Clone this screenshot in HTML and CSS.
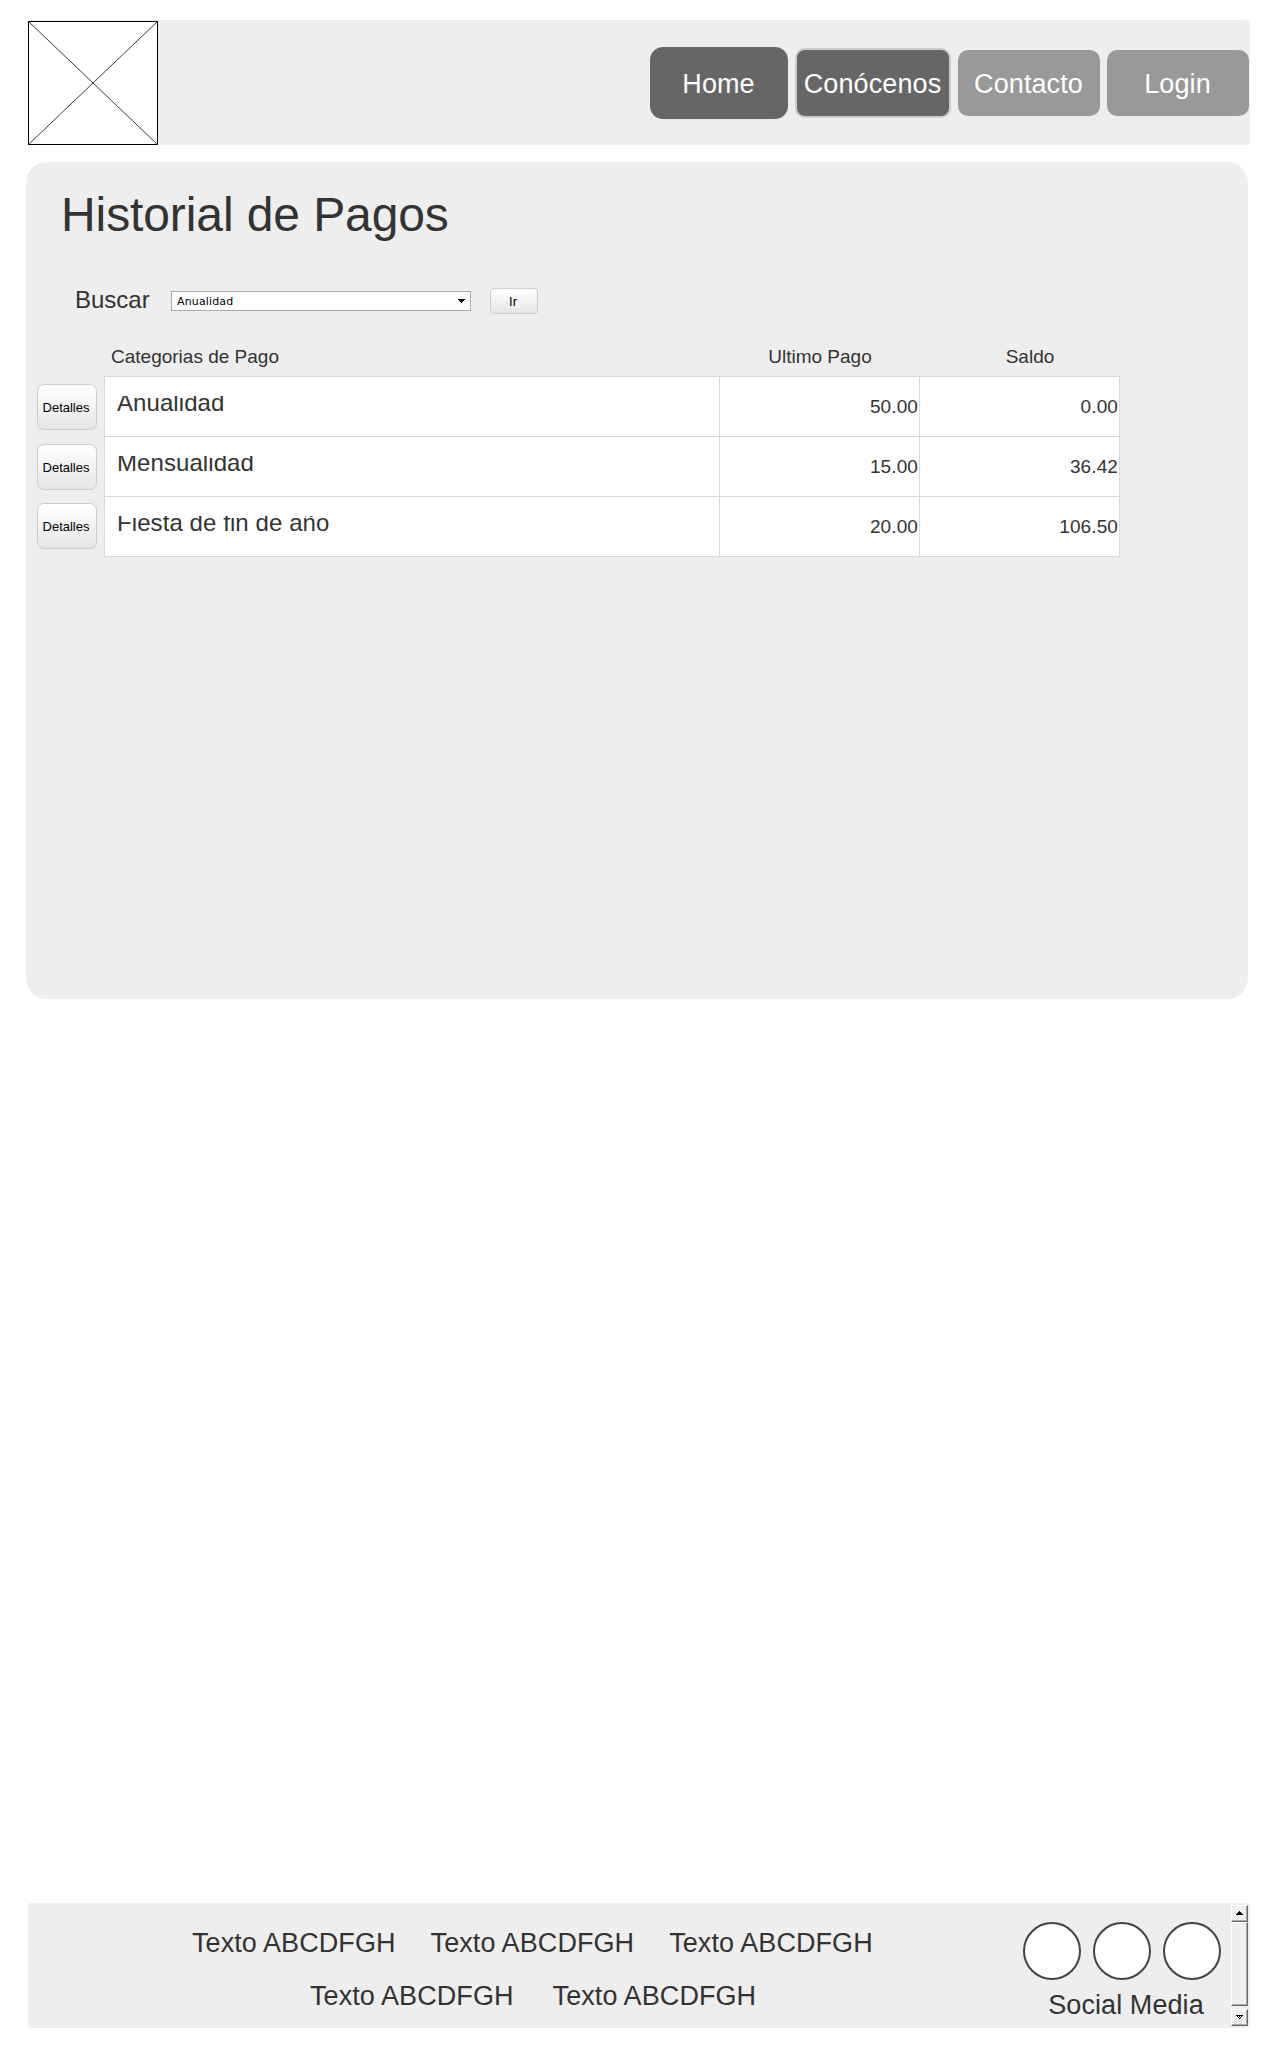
FILE: index.html
```html
<!DOCTYPE html>
<html lang="es">
<head>
<meta charset="utf-8">
<title>Historial de Pagos</title>
<link rel="stylesheet" href="styles.css">
</head>
<body>
<header class="header">
  <svg class="logo" width="130" height="124" viewBox="0 0 130 124">
    <rect x="0.5" y="0.5" width="129" height="123" fill="#fff" stroke="#000"/>
    <path d="M.5 .5L129.5 123.5M.5 123.5L129.5 .5" stroke="#222" stroke-width="0.9"/>
  </svg>
  <nav class="nav">
    <a class="nav-item home">Home</a>
    <a class="nav-item about">Conócenos</a>
    <a class="nav-item contact">Contacto</a>
    <a class="nav-item login">Login</a>
  </nav>
</header>

<main class="panel">
  <h1 class="title">Historial de Pagos</h1>
  <div class="search">
    <span class="search-label">Buscar</span>
    <div class="select">
      <span>Anualidad</span>
      <svg width="7" height="4" viewBox="0 0 7 4" shape-rendering="crispEdges"><path d="M0 0H7V1H6V2H5V3H4V4H3V3H2V2H1V1H0Z"/></svg>
    </div>
    <button class="go">Ir</button>
  </div>
  <div class="heads">
    <span class="head-name">Categorias de Pago</span>
    <span class="head-last">Ultimo Pago</span>
    <span class="head-balance">Saldo</span>
  </div>
  <div class="payments">
    <div class="actions">
      <button class="details">Detalles</button>
      <button class="details">Detalles</button>
      <button class="details last">Detalles</button>
    </div>
    <div class="table">
      <div class="cell name"><span>Anualidad</span></div><div class="cell num">50.00</div><div class="cell num">0.00</div>
      <div class="cell name"><span>Mensualidad</span></div><div class="cell num">15.00</div><div class="cell num">36.42</div>
      <div class="cell name"><span>Fiesta de fin de año</span></div><div class="cell num">20.00</div><div class="cell num">106.50</div>
    </div>
  </div>
</main>

<footer class="footer">
  <div class="links">
    <div class="links-row first"><span>Texto ABCDFGH</span><span>Texto ABCDFGH</span><span>Texto ABCDFGH</span></div>
    <div class="links-row second"><span>Texto ABCDFGH</span><span>Texto ABCDFGH</span></div>
  </div>
  <div class="social">
    <div class="circles"><i></i><i></i><i></i></div>
    <span class="social-label">Social Media</span>
  </div>
  <div class="scrollbar">
    <div class="scroll-part arrow"><svg width="7" height="4" viewBox="0 0 7 4" shape-rendering="crispEdges"><path d="M3 0H4V1H5V2H6V3H7V4H0V3H1V2H2V1H3Z"/></svg></div>
    <div class="scroll-part thumb"></div>
    <div class="scroll-part arrow"><svg width="7" height="4" viewBox="0 0 7 4" shape-rendering="crispEdges"><path d="M0 0H7V1H6V2H5V3H4V4H3V3H2V2H1V1H0Z"/><path fill="#eee" d="M2 1h1v1H2zM4 1h1v1H4zM3 2h1v1H3z"/></svg></div>
  </div>
</footer>
</body>
</html>
```
FILE: styles.css
```css
* { box-sizing: border-box; }
body {
  margin: 0;
  height: 2048px;
  padding: 20px 30px 20px 26px;
  display: flex;
  flex-direction: column;
  background: #fff;
  color: #333;
  font-family: "Liberation Sans", Arial, sans-serif;
}
button { font-family: inherit; padding: 0; color: #000; }

.header {
  width: 1222px;
  height: 125px;
  margin-left: 2px;
  padding-right: 1px;
  display: flex;
  justify-content: space-between;
  background: #eee;
  border-radius: 3px;
  flex: none;
}
.logo { margin-top: 1px; }
.nav { display: flex; align-items: center; height: 126px; }
.nav-item {
  display: flex;
  align-items: center;
  justify-content: center;
  width: 142px;
  height: 66px;
  margin-left: 7px;
  padding: 2px 1px 0 0;
  border-radius: 10px;
  background: #999;
  color: #fff;
  font-size: 27px;
  line-height: 31px;
  letter-spacing: 0.1px;
}
.home { width: 138px; height: 72px; border-radius: 13px; background: #666; }
.about { width: 156px; height: 70px; border: 2px solid #ccc; background: #666; }

.panel {
  width: 1222px;
  height: 837px;
  margin-top: 17px;
  padding-top: 25px;
  background: #eee;
  border-radius: 21px;
  flex: none;
}
.title { margin: 0 0 0 35px; font-size: 48px; line-height: 55px; font-weight: 400; letter-spacing: -0.1px; }
.search { display: flex; margin: 44px 0 0 49px; height: 28px; }
.search-label { width: 96px; font-size: 24px; line-height: 28px; }
.select {
  display: flex;
  align-items: center;
  justify-content: space-between;
  width: 300px;
  height: 20px;
  margin-top: 5px;
  padding: 0 5px;
  border: 1px solid #aaa;
  background: #fff;
  color: #000;
  font: 11px/18px "DejaVu Sans", Verdana, sans-serif;
  letter-spacing: 0.15px;
}
.select span { padding-top: 1px; }
.go {
  width: 48px;
  height: 26px;
  margin: 2px 0 0 19px;
  padding-right: 2px;
  border: 1px solid #ccc;
  border-radius: 4px;
  background: linear-gradient(#fff, #e6e6e6);
  font-size: 13px;
}
.heads {
  display: grid;
  grid-template-columns: 609px 200px 220px;
  margin: 32px 0 0 85px;
  font-size: 19px;
  line-height: 22px;
}
.head-last, .head-balance { text-align: center; }
.payments { display: flex; margin: 8px 0 0 11px; }
.actions { width: 67px; display: flex; flex-direction: column; gap: 14px; padding-top: 8px; }
.details {
  width: 60px;
  height: 46px;
  padding-right: 2px;
  border: 1px solid #ccc;
  border-radius: 7px;
  background: linear-gradient(#fff, #e6e6e6);
  font-size: 13px;
}
.details.last { margin-top: -1px; }
.table {
  display: grid;
  grid-template-columns: 615px 200px 200px;
  grid-auto-rows: 60px;
  border-right: 1px solid #d8d8d8;
  border-bottom: 1px solid #d8d8d8;
}
.cell { border-top: 1px solid #d8d8d8; border-left: 1px solid #d8d8d8; background: #fff; }
.name { padding: 19px 0 0 12px; font-size: 24px; letter-spacing: 0.08px; }
.name span { display: block; height: 25px; overflow: hidden; line-height: 13.3px; }
.num { padding: 1px 1px 0 0; font-size: 19px; line-height: 58px; text-align: right; letter-spacing: 0.1px; }

.footer {
  width: 1222px;
  height: 125px;
  margin: auto 0 0 2px;
  display: flex;
  background: #eee;
  border-radius: 3px;
  flex: none;
  font-size: 27px;
  line-height: 31px;
  letter-spacing: 0.08px;
}
.links { width: 995px; padding-top: 25px; white-space: nowrap; }
.links-row { display: flex; }
.first { margin-left: 164px; gap: 35px; }
.second { margin: 22px 0 0 282px; gap: 39px; }
.social { width: 198px; padding-top: 19px; text-align: center; }
.circles { display: flex; gap: 12px; }
.circles i { width: 58px; height: 58px; border: 2px solid #444; border-radius: 50%; background: #fff; }
.social-label { display: block; margin: 10px 0 0 8px; }
.scrollbar { width: 17px; margin: 2px 0 0 10px; }
.scroll-part {
  width: 17px;
  border: 1px solid #fff;
  border-right: 1px solid #666;
  border-bottom: 1px solid #666;
  box-shadow: inset -1px -1px #aaa;
  background: #eee;
}
.arrow { height: 17px; display: flex; align-items: center; justify-content: center; }
.arrow svg { margin-bottom: 1px; }
.thumb { height: 84px; margin-bottom: 3px; }
```
